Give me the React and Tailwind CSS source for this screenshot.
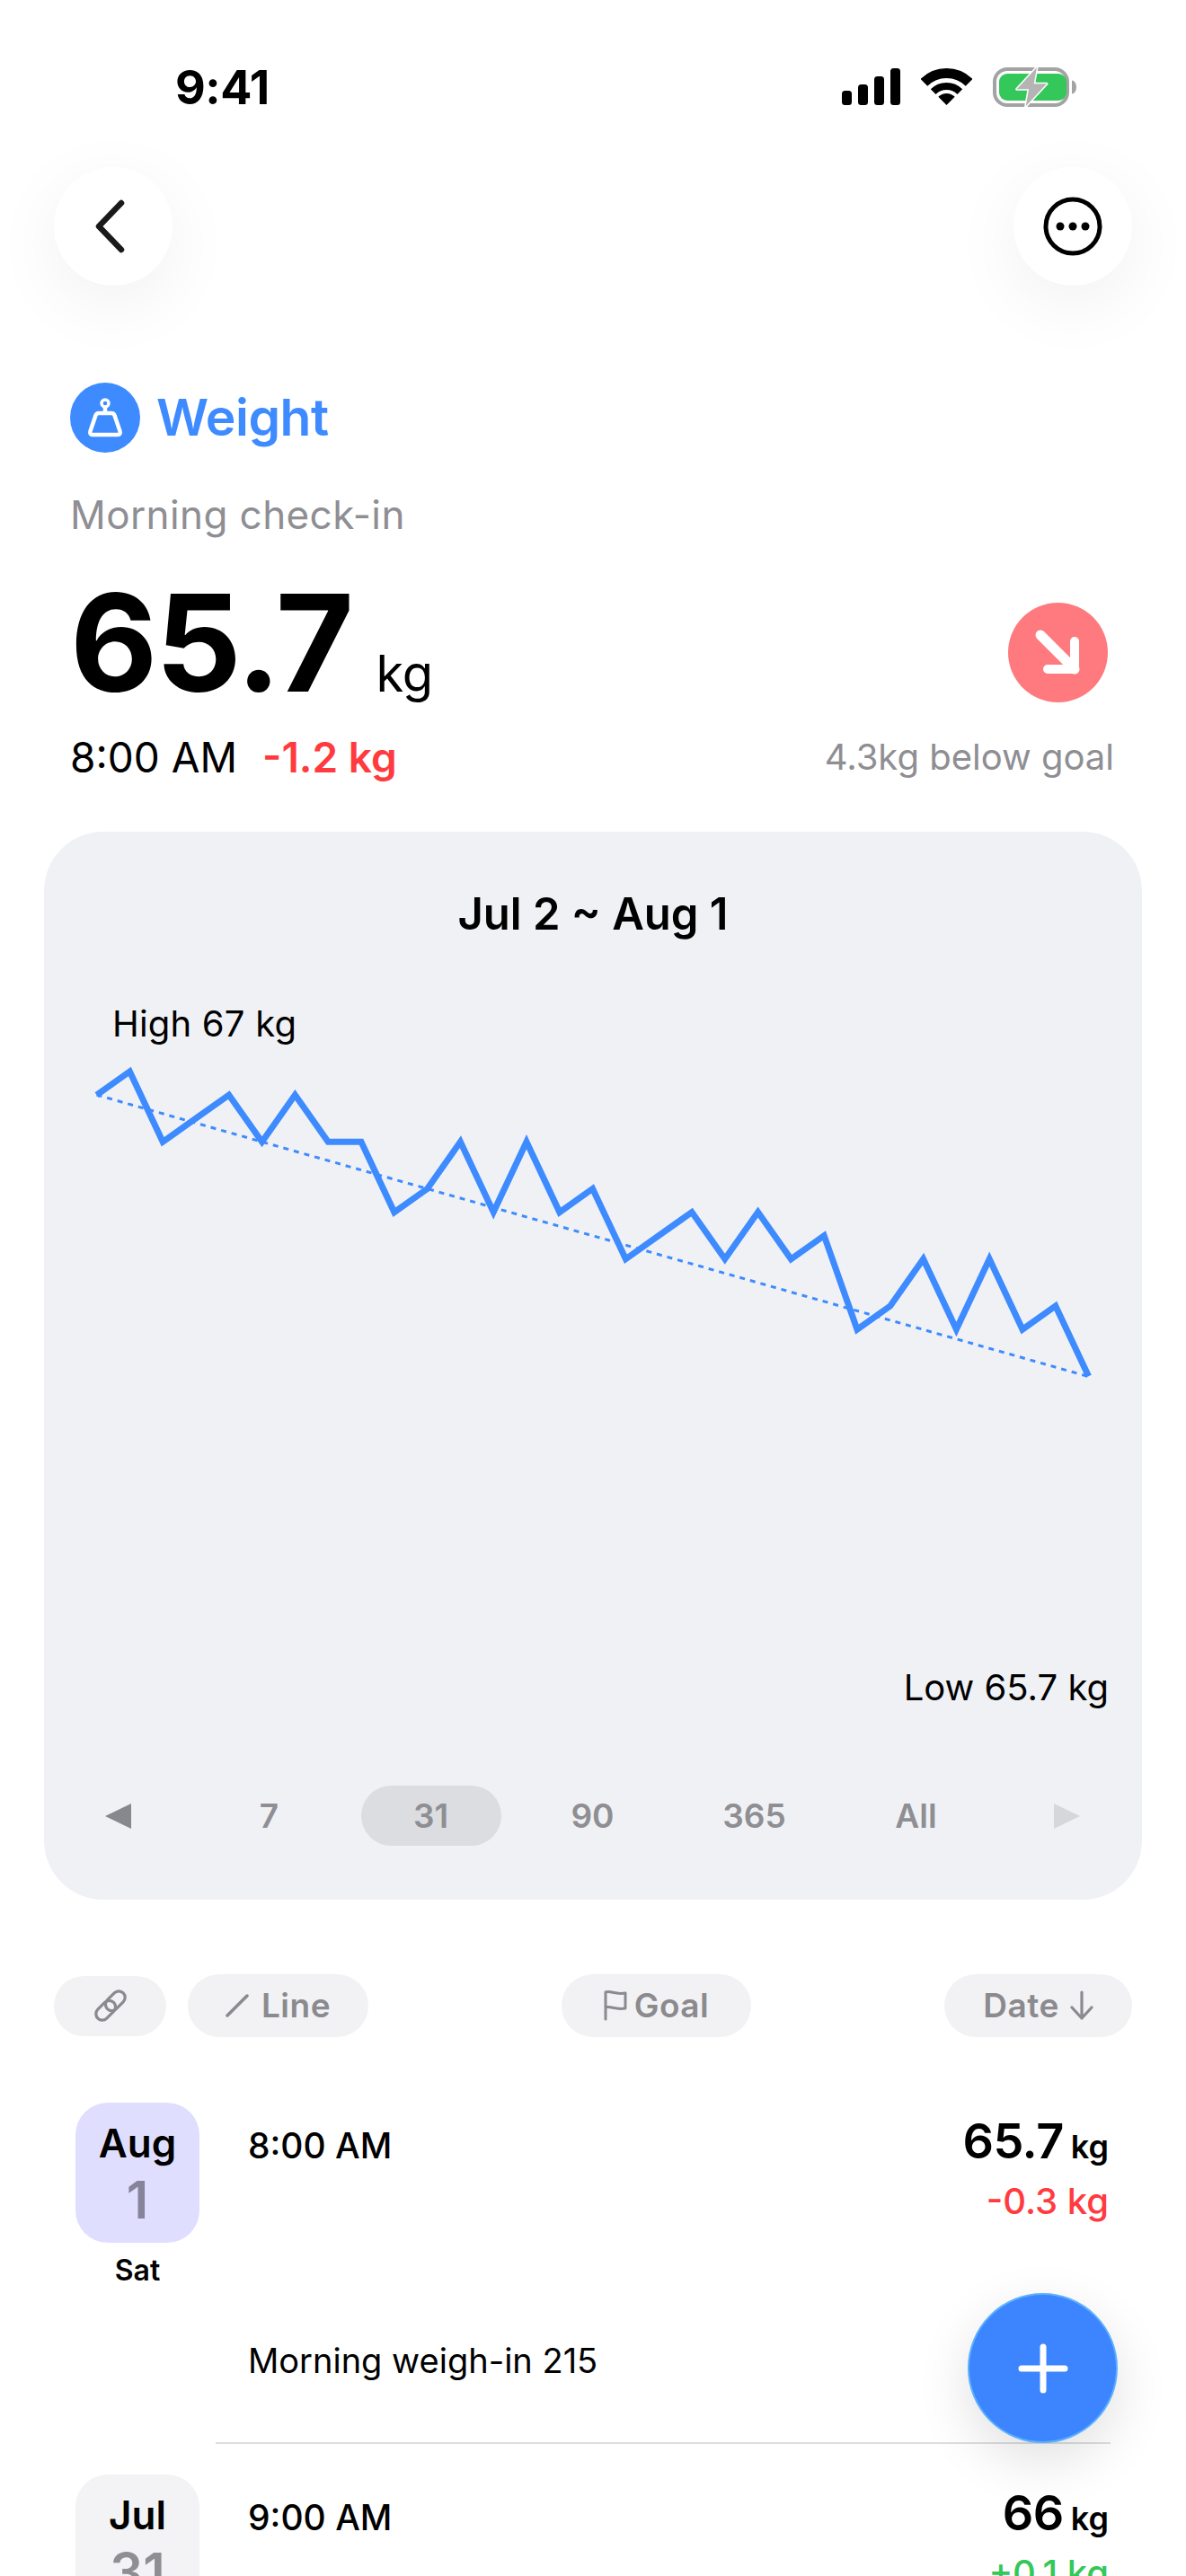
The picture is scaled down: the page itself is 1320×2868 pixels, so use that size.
import React from "react";

const WEIGHTS = [
  66.9, 67, 66.7, 66.8, 66.9, 66.7, 66.9, 66.7, 66.7, 66.4, 66.5, 66.7, 66.4, 66.7, 66.4, 66.5,
  66.2, 66.3, 66.4, 66.2, 66.4, 66.2, 66.3, 65.9, 66, 66.2, 65.9, 66.2, 65.9, 66, 65.7,
];

const linePoints = WEIGHTS.map((w, i) => `${58.6 + i * 36.8},${145 + (67 - w) * 261}`).join(" ");

function StatusBar() {
  return (
    <div className="flex h-[186px] items-start justify-between pl-[195px] pr-[122px] pt-[72px]">
      <span className="text-[52px] font-bold leading-[52px] tracking-[-0.5px] text-black">9:41</span>
      <div className="flex items-start">
        <svg width="65" height="41" viewBox="0 0 65 41" className="mt-[4px]">
          <rect x="0" y="25" width="11" height="16" rx="3.5" />
          <rect x="18" y="18" width="11" height="23" rx="3.5" />
          <rect x="36" y="9" width="11" height="32" rx="3.5" />
          <rect x="54" y="0" width="11" height="41" rx="3.5" />
        </svg>
        <svg width="57" height="42" viewBox="0 0 57 42" className="ml-[23px] mt-[3px]">
          <path d="M3.4 16.9A35.5 35.5 0 0 1 53.6 16.9" fill="none" stroke="#000" strokeWidth="11" />
          <path d="M13.65 27.15A21 21 0 0 1 43.35 27.15" fill="none" stroke="#000" strokeWidth="8" />
          <path d="M28.5 42L19.3 32.8A13 13 0 0 1 37.7 32.8Z" />
        </svg>
        <svg width="93" height="44" viewBox="0 0 93 44" className="ml-[23px] mt-[3px]">
          <rect x="2" y="2" width="81" height="40" rx="14" fill="none" stroke="#a3a3a3" strokeWidth="4" />
          <rect x="7" y="7" width="75" height="30" rx="9" fill="#34c759" />
          <path d="M88 14.5a5 7.5 0 0 1 5 7.5a5 7.5 0 0 1-5 7.5z" fill="#a3a3a3" />
          <path
            d="M49 0L26.7 24.3H40L36.7 43.3L60 18.3H45.7Z"
            fill="#b4b4b4"
            stroke="#fff"
            strokeWidth="3"
            strokeLinejoin="round"
            paintOrder="stroke"
          />
        </svg>
      </div>
    </div>
  );
}

function NavBar() {
  return (
    <div className="flex justify-between px-[60px]">
      <button className="flex h-[132px] w-[132px] items-center justify-center rounded-full bg-white shadow-[0_20px_80px_rgba(0,0,0,0.06)]">
        <svg width="34" height="60" viewBox="0 0 34 60" className="mr-[8px]">
          <path d="M30 4L5 30L30 56" fill="none" stroke="#1a1a1a" strokeWidth="6.5" strokeLinecap="round" strokeLinejoin="round" />
        </svg>
      </button>
      <button className="flex h-[132px] w-[132px] items-center justify-center rounded-full bg-white shadow-[0_20px_80px_rgba(0,0,0,0.06)]">
        <svg width="66" height="66" viewBox="0 0 66 66">
          <circle cx="33" cy="33" r="30" fill="none" stroke="#000" strokeWidth="5" />
          <circle cx="19" cy="33" r="4.5" />
          <circle cx="33" cy="33" r="4.5" />
          <circle cx="47" cy="33" r="4.5" />
        </svg>
      </button>
    </div>
  );
}

function Summary() {
  return (
    <div className="pl-[78px] pr-[80px] pt-[108px]">
      <div className="flex items-center gap-[18px]">
        <div className="flex h-[78px] w-[78px] items-center justify-center rounded-full bg-[#3d8bff]">
          <svg width="46" height="50" viewBox="0 0 46 50" fill="none" stroke="#fff" strokeWidth="4.5" strokeLinejoin="round">
            <circle cx="23" cy="9" r="4" strokeWidth="3.5" />
            <path d="M23 13V20" />
            <path d="M16 20H30Q33 20 33.7 23L39.5 40Q40.5 44 37 44H9Q5.5 44 6.5 40L12.3 23Q13 20 16 20Z" />
          </svg>
        </div>
        <span className="text-[57px] font-semibold leading-[78px] tracking-[-0.5px] text-[#3d8bff]">Weight</span>
      </div>
      <div className="mt-[41px] text-[44px] leading-[56px] tracking-[0.4px] text-[#8e8e93]">Morning check-in</div>
      <div className="mt-[40px] flex h-[150px] items-start justify-between">
        <div className="flex items-baseline">
          <span className="text-[150px] font-bold leading-[150px] tracking-[-2.5px] text-black">65.7</span>
          <span className="ml-[27px] text-[56px] leading-[56px] text-black">kg</span>
        </div>
        <div className="mr-[7px] mt-[30px] flex h-[111px] w-[111px] items-center justify-center rounded-full bg-[#ff7a7e]">
          <svg width="56" height="56" viewBox="0 0 56 56" fill="none" stroke="#fff" strokeLinecap="round" strokeLinejoin="round">
            <path d="M8 8L46 46" strokeWidth="11" />
            <path d="M46 15V46H16" strokeWidth="10" />
          </svg>
        </div>
      </div>
      <div className="mt-[24px] flex h-[56px] items-center justify-between">
        <div className="flex items-baseline gap-[28px]">
          <span className="text-[46px] text-black">8:00 AM</span>
          <span className="text-[46px] font-semibold text-[#ff3b40]">-1.2 kg</span>
        </div>
        <span className="text-[40px] text-[#8e8e93]">4.3kg below goal</span>
      </div>
    </div>
  );
}

function Chart() {
  return (
    <div className="relative h-[940px]">
      <svg viewBox="0 0 1222 940" className="block h-full w-full" fill="none" stroke="#3d8bff">
        <line x1="58.6" y1="171" x2="1163" y2="484.7" strokeWidth="3" strokeDasharray="6 6" />
        <polyline points={linePoints} strokeWidth="7" strokeLinejoin="miter" />
      </svg>
      <span className="absolute left-[76px] top-[67px] text-[40px] leading-[50px] tracking-[0.2px] text-black">High 67 kg</span>
      <span className="absolute right-[37px] top-[806px] text-[40px] leading-[50px] text-black">Low 65.7 kg</span>
    </div>
  );
}

function RangeRow() {
  const ranges = ["7", "31", "90", "365", "All"];
  return (
    <div className="flex items-center justify-between pl-[67px] pr-[68px]">
      <svg width="30" height="30" viewBox="0 0 30 30">
        <path d="M30 1V29L1 15Z" fill="#87888d" />
      </svg>
      <div className="flex gap-[24px]">
        {ranges.map((r) => (
          <span
            key={r}
            className={`flex h-[67px] w-[156px] items-center justify-center rounded-full text-[37px] font-semibold text-[#8e8e93] ${
              r === "31" ? "bg-[#dcdde1]" : ""
            }`}
          >
            {r}
          </span>
        ))}
      </div>
      <svg width="30" height="30" viewBox="0 0 30 30">
        <path d="M0 1V29L29 15Z" fill="#d6d7db" />
      </svg>
    </div>
  );
}

function ChipRow() {
  const chip = "flex h-[70px] items-center justify-center rounded-full bg-[#f2f2f4] text-[37px] font-semibold tracking-[0.5px] text-[#8a8a8f]";
  return (
    <div className="mt-[83px] flex items-center justify-between px-[60px]">
      <div className="flex items-center gap-[24px]">
        <div className={`${chip} !h-[67px] w-[125px]`}>
          <svg width="38" height="38" viewBox="0 0 38 38" fill="none" stroke="#8a8a8f" strokeWidth="3.2">
            <g transform="rotate(-45 19 19)">
              <rect x="-1" y="12" width="25" height="14" rx="7" />
              <rect x="14" y="12" width="25" height="14" rx="7" />
            </g>
          </svg>
        </div>
        <div className={`${chip} w-[201px] gap-[14px]`}>
          <svg width="26" height="26" viewBox="0 0 26 26">
            <path d="M2 24L24 2" stroke="#8a8a8f" strokeWidth="3.5" strokeLinecap="round" />
          </svg>
          Line
        </div>
      </div>
      <div className={`${chip} w-[211px] gap-[8px]`}>
        <svg width="26" height="34" viewBox="0 0 26 34" fill="none" stroke="#8a8a8f" strokeWidth="3" strokeLinecap="round" strokeLinejoin="round">
          <path d="M2 32V2C8 0 12 5 24 3V20C12 22 8 17 2 19" />
        </svg>
        Goal
      </div>
      <div className={`${chip} w-[209px] gap-[12px]`}>
        Date
        <svg width="26" height="34" viewBox="0 0 26 34" fill="none" stroke="#8a8a8f" strokeWidth="3.2" strokeLinecap="round" strokeLinejoin="round">
          <path d="M13 2V31M2 19L13 31L24 19" />
        </svg>
      </div>
    </div>
  );
}

function Entry({ month, day, weekday, time, weight, delta, deltaColor, note, boxColor, dayColor }) {
  return (
    <div className="flex pl-[84px] pr-[86px]">
      <div className="w-[138px] shrink-0">
        <div className={`flex h-[156px] flex-col items-center rounded-[36px] pt-[20px] ${boxColor}`}>
          <span className="text-[44px] font-semibold leading-[50px] text-black">{month}</span>
          <span className={`text-[58px] font-semibold leading-[76px] ${dayColor}`}>{day}</span>
        </div>
        <div className="mt-[11px] text-center text-[32px] font-semibold leading-[40px] text-black">{weekday}</div>
      </div>
      <div className="ml-[54px] min-w-0 flex-1 pt-[18px]">
        <div className="flex h-[50px] items-baseline justify-between">
          <span className="text-[39px] font-medium leading-[50px] text-black">{time}</span>
          <div className="flex items-baseline gap-[8px]">
            <span className="text-[54px] font-semibold leading-[50px] tracking-[-0.5px] text-black">{weight}</span>
            <span className="text-[36px] font-semibold leading-[50px] text-black">kg</span>
          </div>
        </div>
        <div className={`mt-[20px] text-right text-[40px] font-medium leading-[44px] ${deltaColor}`}>{delta}</div>
        <div className="mt-[129px] h-[52px] text-[38px] leading-[52px] text-black">{note}</div>
      </div>
    </div>
  );
}

export default function App() {
  return (
    <div className="relative h-[2868px] w-[1320px] overflow-hidden bg-white font-['Inter',sans-serif]">
      <StatusBar />
      <NavBar />
      <Summary />

      <div className="mx-[49px] mt-[55px] rounded-[66px] bg-[#f0f1f5] pb-[60px] pt-[62px]">
        <div className="text-center text-[49px] font-semibold leading-[60px] text-black">Jul 2 ~ Aug 1</div>
        <Chart />
        <RangeRow />
      </div>

      <ChipRow />

      <div className="mt-[73px]">
        <Entry
          month="Aug"
          day="1"
          weekday="Sat"
          time="8:00 AM"
          weight="65.7"
          delta="-0.3 kg"
          deltaColor="text-[#ff3b40]"
          note="Morning weigh-in 215"
          boxColor="bg-[#e0deff]"
          dayColor="text-[#85849a]"
        />
        <div className="ml-[240px] mr-[84px] mt-[65px] border-t-2 border-[#dedede]" />
        <div className="mt-[34px]">
          <Entry
            month="Jul"
            day="31"
            weekday="Fri"
            time="9:00 AM"
            weight="66"
            delta="+0.1 kg"
            deltaColor="text-[#34c759]"
            note=""
            boxColor="bg-[#f3f3f5]"
            dayColor="text-[#8e8e93]"
          />
        </div>
      </div>

      <button className="absolute left-[1077px] top-[2553px] flex h-[167px] w-[167px] items-center justify-center rounded-full border-2 border-[#5ab0ff] bg-[#3d84ff] shadow-[0_20px_60px_rgba(0,0,0,0.12)]">
        <svg width="56" height="56" viewBox="0 0 56 56" stroke="#fff" strokeWidth="7" strokeLinecap="round">
          <path d="M28 4V52M4 28H52" />
        </svg>
      </button>
    </div>
  );
}
